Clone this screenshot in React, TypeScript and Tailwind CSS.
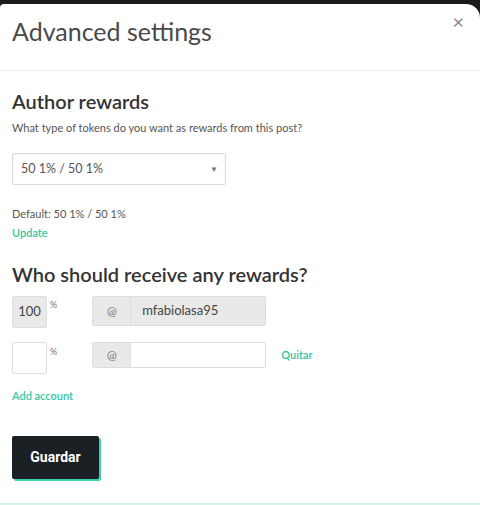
const teal = 'text-[#35c59f]';

export default function App() {
  return (
    <div className="w-[480px] h-[505px] bg-[#1b1b1b] pt-[4px] overflow-hidden" style={{ fontFamily: 'Lato, "Open Sans", sans-serif' }}>
      <div className="relative h-[501px] bg-white rounded-tr-[14px] rounded-tl-[4px] border-b-2 border-[#d8f5ec]">
        {/* close */}
        <button className="absolute right-[16px] top-[7px] text-[#888] text-[20px] leading-none">×</button>

        {/* header */}
        <div className="h-[67px] border-b border-[#eeeeee] px-[12px] pt-[13px]">
          <h1 className="text-[25px] leading-[28px] text-[#4a4a4a]">Advanced settings</h1>
        </div>

        <div className="px-[12px] pt-[18px]">
          <h2 className="text-[20px] leading-[24px] font-semibold text-[#333]">Author rewards</h2>
          <p className="mt-[8px] text-[11px] leading-[14px] text-[#555]">What type of tokens do you want as rewards from this post?</p>

          <div className="mt-[18px] w-[214px] h-[32px] border border-[#dcdcdc] rounded-[2px] shadow-[inset_0_1px_2px_rgba(0,0,0,0.05)] flex items-center justify-between pl-[8px] pr-[7px]">
            <span className="text-[12.5px] text-[#555]">50 1% / 50 1%</span>
            <span className="text-[8px] text-[#777]">▼</span>
          </div>

          <p className="mt-[22px] text-[11px] leading-[14px] text-[#555]">Default: 50 1% / 50 1%</p>
          <p className={`mt-[5px] text-[11px] leading-[14px] font-semibold ${teal}`}>Update</p>

          <h2 className="mt-[22px] text-[20px] leading-[24px] font-semibold text-[#333]">Who should receive any rewards?</h2>

          {/* row 1 */}
          <div className="mt-[10px] flex items-start">
            <div className="w-[35px] h-[32px] bg-[#e9e9e9] border border-[#dddddd] rounded-[2px] flex items-center justify-center text-[13px] text-[#444]">100</div>
            <span className="ml-[3px] mt-[2px] text-[9px] text-[#777]">%</span>
            <div className="ml-[35px] flex h-[30px] w-[174px] border border-[#dddddd] rounded-[2px] bg-[#e9e9e9]">
              <div className="w-[38px] flex items-center justify-center text-[12px] text-[#777] border-r border-[#dddddd]">@</div>
              <div className="flex-1 flex items-center pl-[11px] text-[13px] text-[#444]">mfabiolasa95</div>
            </div>
          </div>

          {/* row 2 */}
          <div className="mt-[14px] flex items-start">
            <div className="w-[35px] h-[32px] bg-white border border-[#dddddd] rounded-[2px]" />
            <span className="ml-[3px] mt-[3px] text-[9px] text-[#777]">%</span>
            <div className="ml-[35px] flex h-[26px] w-[174px] border border-[#dddddd] rounded-[2px] bg-white">
              <div className="w-[38px] flex items-center justify-center text-[12px] text-[#777] bg-[#e9e9e9] border-r border-[#dddddd]">@</div>
              <div className="flex-1" />
            </div>
            <span className={`ml-[15px] mt-[5px] text-[11px] font-semibold ${teal}`}>Quitar</span>
          </div>

          <p className={`mt-[15px] text-[11px] leading-[14px] font-semibold ${teal}`}>Add account</p>

          <button
            className="mt-[33px] w-[87px] h-[43px] bg-[#1b2025] rounded-[2px] text-white text-[14px] font-bold shadow-[2px_2px_0_#3fd1aa]"
            style={{ fontFamily: 'Roboto, sans-serif' }}
          >
            Guardar
          </button>
        </div>
      </div>
    </div>
  );
}
